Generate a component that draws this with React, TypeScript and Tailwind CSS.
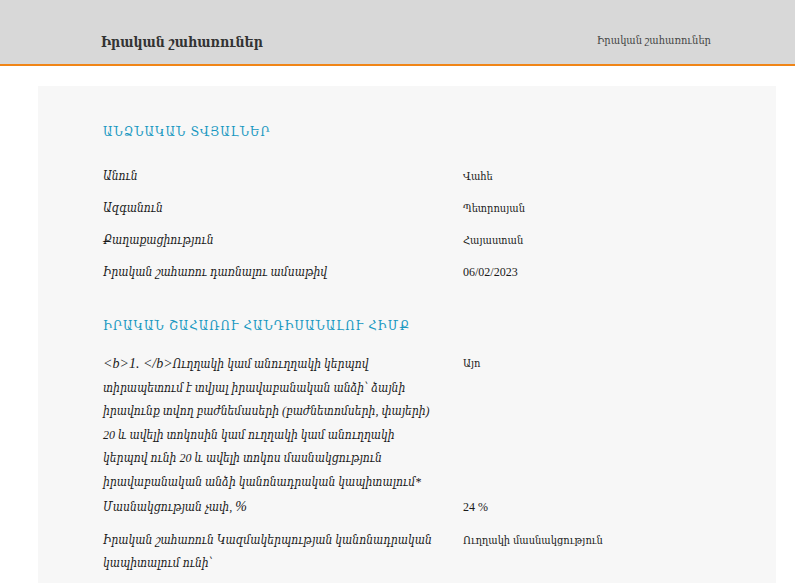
export default function App() {
  const personal = [
    { label: "Անուն", value: "Վահե" },
    { label: "Ազգանուն", value: "Պետրոսյան" },
    { label: "Քաղաքացիություն", value: "Հայաստան" },
    { label: "Իրական շահառու դառնալու ամսաթիվ", value: "06/02/2023", latin: true },
  ];
  const font = { fontFamily: '"Liberation Serif", "DejaVu Serif Condensed", serif' };

  return (
    <div className="min-h-screen bg-white text-[#1a1a1a]" style={font}>
      <header className="h-[66px] bg-[#d8d8d8] border-b-2 border-[#f08517] flex items-end justify-between pl-[101px] pr-[84px]">
        <h1 className="text-[14px] font-bold text-[#333] mb-[11px]">Իրական շահառուներ</h1>
        <span className="text-[11px] text-[#444] mb-[16px]">Իրական շահառուներ</span>
      </header>

      <main className="ml-[38px] mt-[20px] w-[738px] bg-[#f7f7f7] pl-[65px] pr-[40px] pt-[36px] pb-6">
        <h2 className="text-[13px] text-[#1798c1] tracking-[1px] leading-[20px] mb-[18px]">ԱՆՁՆԱԿԱՆ ՏՎՅԱԼՆԵՐ</h2>
        {personal.map((r) => (
          <div key={r.label} className="flex py-1 leading-[24px]">
            <div className="w-[360px] text-[12px] italic">{r.label}</div>
            <div className={r.latin ? "text-[12px]" : "text-[11px]"}>{r.value}</div>
          </div>
        ))}

        <h2 className="text-[13px] text-[#1798c1] tracking-[1px] leading-[20px] mt-[28px] mb-[12px]">
          ԻՐԱԿԱՆ ՇԱՀԱՌՈՒ ՀԱՆԴԻՍԱՆԱԼՈՒ ՀԻՄՔ
        </h2>
        <div className="flex pt-1 -mb-1 leading-[23.6px]">
          <div className="w-[360px] text-[12px] italic">
            <span className="text-[14px]">&lt;b&gt;1. &lt;/b&gt;</span>Ուղղակի կամ անուղղակի կերպով
            <br />
            տիրապետում է տվյալ իրավաբանական անձի՝ ձայնի
            <br />
            իրավունք տվող բաժնեմասերի (բաժնետոմսերի, փայերի)
            <br />
            20 և ավելի տոկոսին կամ ուղղակի կամ անուղղակի
            <br />
            կերպով ունի 20 և ավելի տոկոս մասնակցություն
            <br />
            իրավաբանական անձի կանոնադրական կապիտալում*
          </div>
          <div className="text-[11px]">Այո</div>
        </div>
        <div className="flex py-1 leading-[24px]">
          <div className="w-[360px] text-[12px] italic">
            Մասնակցության չափ, <span className="text-[14px]">%</span>
          </div>
          <div className="text-[12px]">24 %</div>
        </div>
        <div className="flex mt-0.5 py-1 leading-[23.6px]">
          <div className="w-[360px] text-[12px] italic">
            Իրական շահառուն Կազմակերպության կանոնադրական
            <br />
            կապիտալում ունի՝
          </div>
          <div className="text-[11px]">Ուղղակի մասնակցություն</div>
        </div>
      </main>
    </div>
  );
}
